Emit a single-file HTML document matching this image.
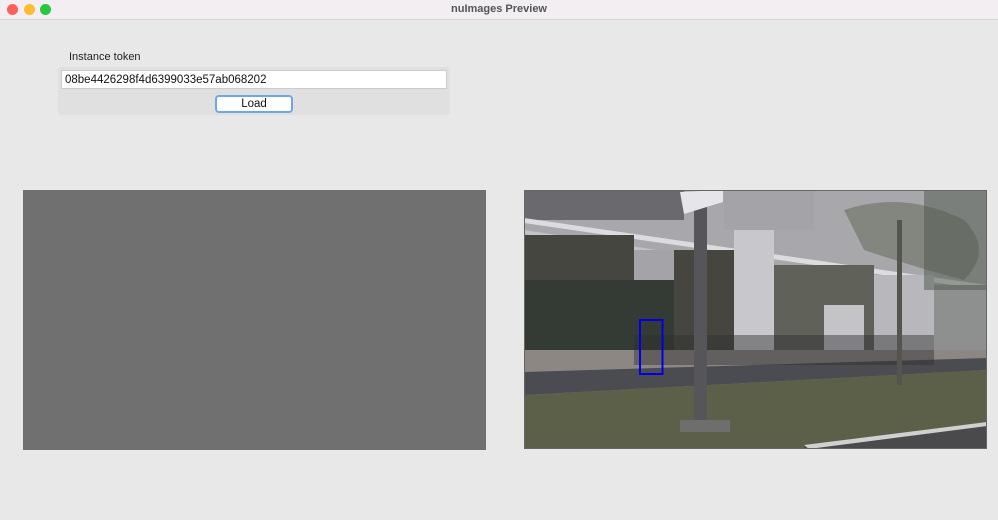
<!DOCTYPE html>
<html><head><meta charset="utf-8"><style>
*{margin:0;padding:0;box-sizing:border-box}
body{width:998px;height:520px;background:#e8e8e8;font-family:"Liberation Sans",sans-serif;position:relative;overflow:hidden}
.title{position:absolute;left:0;top:0;width:998px;height:20px;background:#f2eef2;border-bottom:1px solid #d6d2d6;text-align:center;font-size:11px;font-weight:bold;color:#555;line-height:18px}
.dot{position:absolute;top:4px;width:11px;height:11px;border-radius:50%}
.panel{position:absolute;left:58px;top:67px;width:392px;height:48px;background:#e0e0e0;border-radius:3px}
.lbl{position:absolute;left:69px;top:51px;font-size:11px;color:#222}
.inp{position:absolute;left:61px;top:70px;width:386px;height:19px;background:#fff;border:1px solid #ccc;font-size:11.5px;line-height:18px;padding-left:3px;color:#111}
.btn{position:absolute;left:215px;top:95px;width:78px;height:18px;background:#fff;border:2px solid #6ea7e6;border-radius:4px;font-size:11.5px;text-align:center;line-height:15px;color:#111}
.gray{position:absolute;left:23px;top:190px;width:463px;height:260px;background:#707070}
.photo{position:absolute;left:524px;top:190px;width:463px;height:259px}
</style></head><body>
<div class="title">nuImages Preview</div>
<div class="dot" style="left:7px;background:#fe5f57"></div>
<div class="dot" style="left:24px;background:#febc2e"></div>
<div class="dot" style="left:40px;background:#28c840"></div>
<div class="lbl">Instance token</div>
<div class="panel"></div>
<div class="inp">08be4426298f4d6399033e57ab068202</div>
<div class="btn">Load</div>
<div class="gray"></div>
<svg class="photo" viewBox="0 0 463 259" width="463" height="259">
<rect width="463" height="259" fill="#8c8c8e"/>
<rect x="0" y="0" width="463" height="100" fill="#a8a8ac"/>
<rect x="0" y="0" width="160" height="30" fill="#6a6a6e"/>
<rect x="200" y="0" width="90" height="40" fill="#a4a4a8"/>
<polygon points="0,28 463,95 463,100 0,33" fill="#dcdce0"/>
<polygon points="0,40 463,110 463,114 0,44" fill="#c4c4c8"/>
<rect x="0" y="45" width="110" height="120" fill="#44463f"/>
<rect x="110" y="60" width="40" height="105" fill="#a4a4a8"/>
<rect x="150" y="60" width="60" height="100" fill="#46453f"/>
<rect x="0" y="90" width="150" height="75" fill="#343b34"/>
<rect x="210" y="40" width="40" height="120" fill="#c8c8cc"/>
<rect x="250" y="75" width="100" height="85" fill="#60625a"/>
<rect x="300" y="115" width="40" height="45" fill="#c4c4c8"/>
<rect x="350" y="85" width="60" height="75" fill="#b8b8bc"/>
<rect x="410" y="95" width="53" height="65" fill="#8e9090"/>
<path d="M320,20 Q380,0 440,30 Q470,60 440,90 Q400,80 340,60Z" fill="#6a7060" opacity=".6"/>
<rect x="400" y="0" width="63" height="100" fill="#4e564c" opacity=".5"/>
<rect x="0" y="160" width="463" height="22" fill="#8d8784"/>
<polygon points="0,182 463,168 463,180 0,205" fill="#4b4b52"/>
<polygon points="0,205 463,180 463,259 0,259" fill="#5d6049"/>
<rect x="110" y="145" width="300" height="30" fill="#2e2e30" opacity=".45"/>
<rect x="170" y="12" width="13" height="225" fill="#56565a"/>
<polygon points="156,2 199,0 199,12 160,24" fill="#e6e6ea"/>
<rect x="156" y="230" width="50" height="12" fill="#6e6e6c"/>
<rect x="373" y="30" width="5" height="165" fill="#555550"/>
<polygon points="280,255 463,234 463,259 280,259" fill="#4a4a4c"/>
<polygon points="280,255 463,232 463,236 285,259" fill="#d0d0d0"/>
<rect x="116" y="130" width="22.5" height="54" fill="none" stroke="#0000e0" stroke-width="2"/>
<rect x="0.5" y="0.5" width="462" height="258" fill="none" stroke="#666" stroke-width="1"/>
</svg>
</body></html>
